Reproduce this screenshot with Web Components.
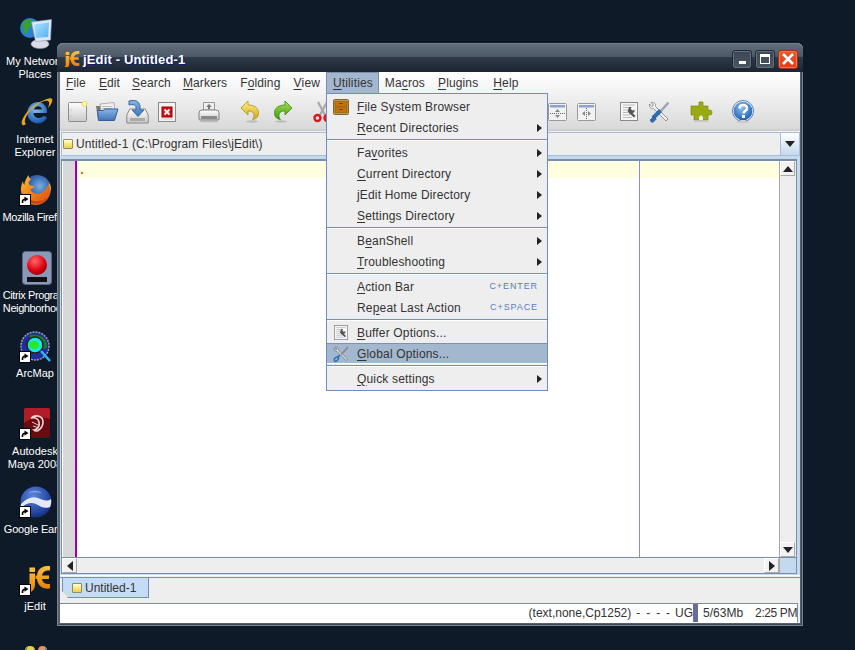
<!DOCTYPE html>
<html lang="en"><head><meta charset="utf-8"><title>jEdit</title>
<style>
html,body{margin:0;height:100%;overflow:hidden;background:#0f1a28;font-family:"Liberation Sans",Arial,sans-serif}
</style></head><body>
<jedit-desktop></jedit-desktop>
<script>
const defs=`<defs>
<linearGradient id="g1" x1="0" y1="0" x2="0" y2="1"><stop offset="0" stop-color="#fff"/><stop offset="1" stop-color="#c9c9c9"/></linearGradient>
<linearGradient id="blue" x1="0" y1="0" x2="0" y2="1"><stop offset="0" stop-color="#8db4e6"/><stop offset="1" stop-color="#3f74b8"/></linearGradient>
<linearGradient id="yel" x1="0" y1="0" x2="0" y2="1"><stop offset="0" stop-color="#fff28c"/><stop offset="1" stop-color="#d2a414"/></linearGradient>
<linearGradient id="grn" x1="0" y1="0" x2="0" y2="1"><stop offset="0" stop-color="#a8e050"/><stop offset="1" stop-color="#3f9a12"/></linearGradient>
<radialGradient id="red" cx=".4" cy=".3" r=".8"><stop offset="0" stop-color="#ff6a6a"/><stop offset=".6" stop-color="#e00010"/><stop offset="1" stop-color="#7a0008"/></radialGradient>
<radialGradient id="ge" cx=".4" cy=".3" r=".85"><stop offset="0" stop-color="#5a86dc"/><stop offset=".7" stop-color="#1f3f9c"/><stop offset="1" stop-color="#0c1c58"/></radialGradient>
<radialGradient id="ball" cx=".45" cy=".35" r=".8"><stop offset="0" stop-color="#8cc0f0"/><stop offset=".7" stop-color="#2a68b8"/><stop offset="1" stop-color="#0e3c80"/></radialGradient>
<radialGradient id="ff" cx=".6" cy=".4" r=".6"><stop offset="0" stop-color="#7ab0e0"/><stop offset=".7" stop-color="#2a5ca8"/><stop offset="1" stop-color="#1c3c80"/></radialGradient>
<linearGradient id="ffo" x1="0" y1="0" x2="1" y2="1"><stop offset="0" stop-color="#ffc030"/><stop offset=".5" stop-color="#f08018"/><stop offset="1" stop-color="#d84810"/></linearGradient>
<linearGradient id="ora" x1="0" y1="0" x2="0" y2="1"><stop offset="0" stop-color="#ffc23c"/><stop offset="1" stop-color="#e87c0c"/></linearGradient>
<linearGradient id="scr" x1="0" y1="0" x2="1" y2="1"><stop offset="0" stop-color="#a8e4ff"/><stop offset="1" stop-color="#58b0f0"/></linearGradient>
</defs>`;
const jeLogo=`<path d="M9.500 7.500h5.500v11c0 4-2 7-6 8.500l-1.500-3c1.500-.8 2-2 2-4.500zM9.500 1.500h5.500v4.500h-5.500z" fill="url(#ora)"/><path d="M30 0c-7.500-.5-12.500 3-13 9.500H15.500v3.500h1.500c.5 6.500 5.500 10.500 13 9.500v-4.500c-4.500.5-7.500-1-8-5h7v-3.500h-7c.5-3.500 3.500-5.500 8-5z" fill="url(#ora)"/>`;
const ICONS={
 new:[20,21,`<rect x=".5" y="1.500" width="18" height="19" rx="1" fill="url(#g1)" stroke="#8c8c8c"/><circle cx="3" cy="9" r=".6" fill="#999"/><circle cx="3" cy="15" r=".6" fill="#999"/><circle cx="16.500" cy="3" r="2.500" fill="#fff8a0" stroke="#e8d860"/>`],
 open:[24,21,`<path d="M1 5h6l1 2v11H3z" fill="#77797d"/><path d="M5 3l14-1.500 1 9H6z" fill="#eee" stroke="#999" stroke-width=".7"/><path d="M7 5.500h10M7 7.500h10" stroke="#aaa" stroke-width=".7"/><path d="M3.500 19.500L2.500 9.500h6l1-1.500h13.500l-3.500 11.500z" fill="url(#blue)" stroke="#345f98"/>`],
 save:[23,24,`<path d="M.8 15l3-6h15.400l3 6v8H.8z" fill="url(#g1)" stroke="#888"/><rect x="4" y="18" width="15" height="3" fill="#aaa"/><path d="M3 1c6-1.500 10 0 11 5v4h4l-6 6.500L6 10h4V7C10 5 7 4 3 5z" fill="url(#blue)" stroke="#2f6aa8"/>`],
 close:[18,20,`<rect x=".5" y=".5" width="17" height="19" fill="#f4f4f4" stroke="#8a8a8a"/><rect x="4" y="5" width="10" height="10" fill="#d01018" stroke="#900"/><path d="M6.500 7.500l5 5M11.500 7.500l-5 5" stroke="#fff" stroke-width="1.800"/><path d="M3 17h12" stroke="#ccc"/>`],
 print:[22,22,`<path d="M5.500 9V1.500h11V9z" fill="#f0f0f0" stroke="#999"/><path d="M11 3l3 3h-2v2h-2V6H8z" fill="#777"/><path d="M1 12q0-3 3-3h14q3 0 3 3v6q0 1-1 1H2q-1 0-1-1z" fill="url(#g1)" stroke="#808080"/><rect x="3" y="15" width="16" height="3" fill="#8a8a8a"/><path d="M2.500 20.500h17" stroke="#bbb" stroke-width="1.500"/>`],
 undo:[20,23,`<path d="M8 1L1 8l7 7v-4c4 0 6 1.500 6 4.500 0 1.500-.5 3-1.500 4C17 19 18.500 16 18.500 12.500 18.500 8 14 5 8 5z" fill="url(#yel)" stroke="#b09010" stroke-width=".8"/><ellipse cx="12" cy="21.500" rx="6" ry="1.200" fill="#bbb"/>`],
 redo:[20,23,`<path d="M12 1l7 7-7 7v-4c-4 0-6 1.500-6 4.500 0 1.500.5 3 1.500 4C3 19 1.500 16 1.500 12.500 1.500 8 6 5 12 5z" fill="url(#grn)" stroke="#3a8a10" stroke-width=".8"/><ellipse cx="8" cy="21.500" rx="6" ry="1.200" fill="#bbb"/>`],
 cut:[20,22,`<path d="M5 1l7 13M14 1L7 14" stroke="#a8a8a8" stroke-width="2.200" fill="none"/><circle cx="4.500" cy="17" r="3" fill="none" stroke="#d81818" stroke-width="2.400"/><circle cx="14.500" cy="17" r="3" fill="none" stroke="#d81818" stroke-width="2.400"/>`],
 splith:[19,18,`<rect x=".5" y=".5" width="18" height="17" rx="1" fill="#f2f2f2" stroke="#9a9a9a"/><rect x="2" y="2" width="15" height="2.500" fill="#8aa4cc"/><path d="M2 10.500h15" stroke="#666" stroke-dasharray="1 1"/><path d="M9.500 6l2.500 3H7zM9.500 15l2.500-3H7z" fill="#888"/>`],
 splitv:[19,18,`<rect x=".5" y=".5" width="18" height="17" rx="1" fill="#f2f2f2" stroke="#9a9a9a"/><rect x="2" y="2" width="15" height="2.500" fill="#8aa4cc"/><path d="M9.500 5v11" stroke="#666" stroke-dasharray="1 1"/><path d="M5 10.500l3-2.500v5zM14 10.500l-3-2.500v5z" fill="#888"/>`],
 bufopt:[18,20,`<rect x=".5" y=".5" width="17" height="18" fill="#f6f6f6" stroke="#8a8a8a"/><path d="M3 3h12M3 5.500h6M3 8h5M3 10.500h5M3 13h7M3 15.500h9" stroke="#bbb"/><path d="M9 5l2.500 0-.8 2 1.800 1.500 2-.8 0 2.500-2 .8 3 3-1.500 1.500-3.300-3-1-.5-2-2.500z" fill="#555"/>`],
 tools:[22,22,`<path d="M3 1.500L5.500 4 4 5.500 1.500 3C.8 5.500 2.500 8 5.500 7.500L18 20l2-2L7.500 5.500C8 2.500 5.500.8 3 1.500z" fill="#f2f2f2" stroke="#8a8a8a" stroke-width=".9"/><path d="M20.500 1.500l-9 10" stroke="#9aa6b4" stroke-width="2.500"/><path d="M12.500 9.500L5 17" stroke="#2f6cb0" stroke-width="4"/><path d="M5.500 15.500l-3 3a2 2 0 0 0 2.800 2.500l3-3z" fill="#2f6cb0" stroke="#1e4c88" stroke-width=".6"/>`],
 tools2:[22,22,`<path d="M3 1.500L5.500 4 4 5.500 1.500 3C.8 5.500 2.500 8 5.500 7.500L18 20l2-2L7.500 5.500C8 2.500 5.500.8 3 1.500z" fill="#d4d9de" stroke="#7a8088" stroke-width="1.200"/><path d="M20.500 1.500l-9 10" stroke="#889" stroke-width="2.400"/><path d="M9.500 12.500L6 16" stroke="#2f6cb0" stroke-width="2.600"/><ellipse cx="4.500" cy="18" rx="3.400" ry="2.200" transform="rotate(-45 4.500 18)" fill="none" stroke="#2f6cb0" stroke-width="2"/>`],
 plugin:[23,22,`<path d="M9 1h4v3q0 1 1 1h4v4h2q2 0 2 2.500T20 14h-2v5H4v-5H1V5h8V3q0-1 0-2z" fill="#9aaa14" stroke="#7c8a10" stroke-width=".7"/><path d="M9 19v-3l2-2 2 2v3z" fill="#f0f0e0"/><path d="M4 20.500h15" stroke="#ccc" stroke-width="1.500"/>`],
 help:[22,23,`<circle cx="11" cy="11" r="10" fill="url(#ball)" stroke="#fff" stroke-width="1.300"/><circle cx="11" cy="11" r="10.500" fill="none" stroke="#2a5a9c" stroke-width=".8"/><path d="M7.500 8.500c0-4.500 7.500-4.500 7.500-.3 0 2.800-3.500 2.800-3.500 5.300" fill="none" stroke="#fff" stroke-width="2.500"/><rect x="10" y="15" width="3" height="3" fill="#fff"/><ellipse cx="11" cy="22" rx="7" ry="1" fill="#ccc"/>`],
 fsb:[16,16,`<rect x=".5" y=".5" width="15" height="15" rx="1" fill="#bf9a50" stroke="#7a6a30"/><rect x="2" y="2.500" width="12" height="5" fill="#c8700c" stroke="#8a5a10" stroke-width=".6"/><rect x="2" y="8.500" width="12" height="5" fill="#c8700c" stroke="#8a5a10" stroke-width=".6"/><path d="M6.500 4.500h3M6.500 10.500h3" stroke="#5a3a08"/>`],
 je:[16,16,`<svg viewBox="7 0 24 24" width="16" height="16">${jeLogo}</svg>`],
 network:[34,34,`<circle cx="10" cy="11" r="10" fill="#2a7ed4"/><path d="M3 5c4-3 8-3 10-1s-2 5-4 7-1 7-3 6-5-8-3-12z" fill="#38a030"/><path d="M12 15l4-2 1 3z" fill="#38a030"/><path d="M16 23l8-1 1 5-7 1z" fill="#aab0c4"/><ellipse cx="20" cy="27" rx="9" ry="4.500" fill="#dcdce4" stroke="#9a9aa8" stroke-width=".6"/><path d="M11.500 5l20-2.500-1 20.500-15 1.500z" fill="#dfe8f8" stroke="#8aa0c0" stroke-width=".6"/><path d="M14 7.500l15-2-.8 14.500L16 21z" fill="url(#scr)"/>`],
 ie:[34,32,`<path d="M27 20c-2 8-15 9-19 0-3-9 4-15 10-15s10 6 9 11H13.500c0 6 8 6 10 3z M14 12.500h8c-.5-4.500-7-4.500-8 0z" fill="url(#ball)" fill-rule="evenodd"/><path d="M2.500 28C-1 25 7 12 18 6 24 3 31 0 32 2c1 2-1 6-4 9 1-3 2-6 0-7-3-1-9 2-14 6S2 24 6 27c-1 1-2 1.500-3.500 1z" fill="#e8a818"/>`],
 firefox:[32,32,`<circle cx="17" cy="15" r="14" fill="url(#ff)"/><path d="M29 9c4 9 0 18-8 21-8 3-16-1-19-8C0 17 1 11 3 7c0 2 .5 3 1.500 4 0-4 2-7 4-10 0 2 1 3.500 3 4.500-3 1-3.500 4-2 5.500 1 1 3 .5 5 1.500-1 2-3 2-4 3 1 3 5 5 9 4s8-5 9.500-11z" fill="url(#ffo)"/><path d="M1 17c1 7 8 13 16 12.500 5-.3 9-3.500 11-7-3 3.500-7 5.500-12 5S4 23 1 17z" fill="#c83c10"/><path d="M29 9c1 3 1.500 6 .8 9 1.500-3 1-7-.8-9z" fill="#ffe060"/>`],
 citrix:[30,34,`<rect x=".5" y=".5" width="29" height="33" rx="3" fill="#8c98b8" stroke="#5a6680"/><circle cx="15" cy="14" r="10" fill="url(#red)"/><rect x="5" y="26" width="20" height="5" fill="#111"/>`],
 arcmap:[32,32,`<circle cx="15" cy="15" r="14" fill="#1e2c9c" stroke="#9aa0b0" stroke-width="1.500" stroke-dasharray="2 1"/><path d="M10 4c7-2 16 2 17 9s-5 5-9 2-10-5-8-11z" fill="#1c7a2c"/><circle cx="15" cy="14" r="8" fill="#18e8e0" stroke="#222" stroke-width="1.500"/><ellipse cx="14" cy="14" rx="5" ry="4" fill="#28e828"/><path d="M21 20l9 10" stroke="#30b8ff" stroke-width="2.500"/>`],
 maya:[26,30,`<rect width="26" height="30" rx="2" fill="#6c0a12"/><path d="M0 2q0-2 2-2h22q2 0 2 2v9Q12 6 0 15z" fill="#b01c28"/><path d="M7 10c5-4 12-2 12 4s-6 11-9 8c3 0 6-4 5-8s-5-5-8-4z" fill="none" stroke="#f0d8d8" stroke-width="1.600"/><path d="M8 14l8 4M9 18l6 2" stroke="#e8c8c8"/>`],
 earth:[32,32,`<circle cx="16" cy="16" r="15.500" fill="url(#ge)"/><path d="M1 18c6-6 11-8 17-6 5 2 9 4 13 1 .5 3 .2 5-1 8-5 2-9 0-12-2-5-3-11-3-17 3-.5-1-.5-3 0-4z" fill="#e4e8f2"/><path d="M8 7c4-3 10-3 14 0-5-1-10-1-14 0z" fill="#8aa4e4"/>`],
 jedit:[32,32,`<svg viewBox="0 0 32 32" width="32" height="32" x="0" y="0">${jeLogo}</svg>`],
 tray:[24,8,`<path d="M0 8q0-5 5-5t5 5z" fill="#e8d040"/><path d="M0 8q1-4 3-4L1 8z" fill="#60a050"/><path d="M13 8q0-5 4.500-5T22 8z" fill="#f09060"/><path d="M20 4q2 1 2 4h-2z" fill="#4a90d0"/>`]
};
let uid=0;
function svgFor(name,size){
 const [w,h,body]=ICONS[name];
 const id='i'+(++uid);
 const b=body.replace(/url\(#(\w+)\)/g,`url(#${id}$1)`);
 const d=defs.replace(/id="(\w+)"/g,`id="${id}$1"`);
 const W=size||w,H=size?Math.round(size*h/w):h;
 return `<svg xmlns="http://www.w3.org/2000/svg" width="${W}" height="${H}" viewBox="0 0 ${w} ${h}">${d}${b}</svg>`;
}
class Base extends HTMLElement{
 constructor(){super();this.attachShadow({mode:'open'});}
}
class AppIcon extends Base{connectedCallback(){
 this.shadowRoot.innerHTML=`<style>:host{display:block;line-height:0;flex:none}svg{display:block}</style>${svgFor(this.getAttribute('name'),+this.getAttribute('size')||0)}`;
}}
customElements.define('app-icon',AppIcon);

class DeskIcon extends Base{connectedCallback(){
 const a=this.getAttribute('shortcut')!==null;
 const ix=this.getAttribute('ix')||20;
 this.shadowRoot.innerHTML=`<style>
 :host{position:absolute;left:0;width:70px;display:block;color:#fff;font:11px/13px "Liberation Sans",sans-serif;text-align:center;letter-spacing:var(--ls,0)}
 .ic{position:relative;height:var(--ih,34px);margin-left:${ix}px;width:36px}
 .sc{position:absolute;left:${20-ix}px;bottom:3px;width:10px;height:10px;background:#fff;outline:1px solid #000}
 .sc svg{display:block}
 .t{margin-top:var(--lg,9px);white-space:nowrap;display:flex;flex-direction:column;align-items:center}
 </style><div class="ic"><app-icon name="${this.getAttribute('icon')}"></app-icon>${a?`<div class="sc"><svg width="10" height="10" viewBox="0 0 10 10"><path d="M2.500 8V6.500Q2.500 4.500 5 4.200" fill="none" stroke="#000" stroke-width="1.600"/><path d="M4.500 1.500L8.500 4 4.500 6.800z" fill="#000"/></svg></div>`:''}</div><div class="t"><slot></slot></div>`;
}}
customElements.define('desk-icon',DeskIcon);

class TitleBar extends Base{connectedCallback(){
 this.shadowRoot.innerHTML=`<style>
 :host{display:flex;align-items:center;height:26px;padding:3px 5px 0 7px;flex:none;background:linear-gradient(#626f7c 0,#4c5866 48%,#2f3a48 50%,#1c2532 100%);border-radius:6px 6px 0 0;box-shadow:inset 0 1px #78848f}
 .t{font:bold 13px "Liberation Sans",sans-serif;color:#fff;text-shadow:1px 1px 0 #0a1a70;margin-left:3px;flex:1;letter-spacing:.15px}
 .b{width:20px;height:19px;box-sizing:border-box;border-radius:3px;border:1px solid #1e2834;background:linear-gradient(#3c4654,#4a5562);margin-left:3px;box-shadow:inset 0 0 0 1px #66717e;display:flex;align-items:center;justify-content:center}
 .x{background:linear-gradient(#e8582c,#dc4018);border-color:#a03010;box-shadow:inset 0 0 0 1px #f07848}
 .m{display:block;width:7px;height:3px;background:#fff;margin-top:7px}
 .r{display:block;width:10px;height:10px;box-sizing:border-box;border:1.500px solid #fff;border-top-width:3px}
 </style><app-icon name="je"></app-icon><span class="t"><slot></slot></span>
 <div class="b"><i class="m"></i></div><div class="b"><i class="r"></i></div><div class="b x"><svg width="12" height="12" viewBox="0 0 12 12"><path d="M1 1l10 10M11 1L1 11" stroke="#fff" stroke-width="2.500"/></svg></div>`;
}}
customElements.define('title-bar',TitleBar);

class MenuTitle extends Base{connectedCallback(){
 this.shadowRoot.innerHTML=`<style>
 :host{display:flex;align-items:center;height:21px;box-sizing:border-box;padding:0 7px 0 6px;color:#333;font:12px "Liberation Sans",sans-serif;letter-spacing:.13px;flex:none}
 :host([active]){background:#a3b8cf;box-shadow:inset 1px 0 #7a90ac,inset -1px 0 #7a90ac,inset 0 1px #7a90ac;padding:0 6px 0 7px}
 </style><slot></slot>`;
}}
customElements.define('menu-title',MenuTitle);
class MenuBar extends Base{connectedCallback(){
 this.shadowRoot.innerHTML=`<style>:host{display:flex;height:21px;flex:none;background:linear-gradient(#fff,#f2f2f2)}</style><slot></slot>`;
}}
customElements.define('menu-bar',MenuBar);

class ToolBar extends Base{connectedCallback(){
 this.shadowRoot.innerHTML=`<style>:host{display:flex;align-items:center;height:38px;box-sizing:border-box;flex:none;background:linear-gradient(#f2f2f2,#d9d9d9);border-bottom:2px solid #cfcfcf;padding:1px 0 0 8px}</style><slot></slot>`;
}}
customElements.define('tool-bar',ToolBar);

class BufferSwitcher extends Base{connectedCallback(){
 this.shadowRoot.innerHTML=`<style>
 :host{display:flex;height:24px;flex:none;box-sizing:border-box;margin:1px 0 0 1px;border:1px solid #a9bfd9;background:#eee;font:12px "Liberation Sans",sans-serif;letter-spacing:.11px;color:#333;align-items:center;position:relative}
 .s{flex:1;display:flex;align-items:center;gap:3px;padding-left:1px;white-space:nowrap}
 .d{width:19px;height:22px;box-sizing:border-box;border-left:1px solid #a9bfd9;background:linear-gradient(#fff,#c4d8ee);display:flex;align-items:center;justify-content:center}
 .d i{border:5.500px solid transparent;border-top:6px solid #222;border-bottom:0}
 </style><div class="s"><buffer-dot></buffer-dot><slot></slot></div><div class="d"><i></i></div>`;
}}
customElements.define('buffer-switcher',BufferSwitcher);
class BufferDot extends Base{connectedCallback(){
 this.shadowRoot.innerHTML=`<style>:host{display:block;width:10px;height:10px;box-sizing:border-box;flex:none;border:1px solid #8a8a70;border-radius:1px;background:linear-gradient(#ffffc8,#f0d040)}</style>`;
}}
customElements.define('buffer-dot',BufferDot);

class ScrollBtn extends Base{connectedCallback(){
 const d=this.getAttribute('dir');
 const tri={u:'border-bottom:6px solid #222;border-top:0;border-left:5px solid transparent;border-right:5px solid transparent',
  d:'border-top:6px solid #222;border-bottom:0;border-left:5px solid transparent;border-right:5px solid transparent',
  l:'border-right:6px solid #222;border-left:0;border-top:5px solid transparent;border-bottom:5px solid transparent',
  r:'border-left:6px solid #222;border-right:0;border-top:5px solid transparent;border-bottom:5px solid transparent'}[d];
 this.shadowRoot.innerHTML=`<style>:host{display:flex;align-items:center;justify-content:center;width:15px;height:15px;box-sizing:border-box;flex:none;background:#f2f2f2;border:1px solid #a8a8a8;border-top-color:#fff;border-left-color:#fff}i{display:block;${tri}}</style><i></i>`;
}}
customElements.define('scroll-btn',ScrollBtn);

class TextArea extends Base{connectedCallback(){
 this.shadowRoot.innerHTML=`<style>
 :host{display:flex;flex-direction:column;flex:none;height:420px;box-sizing:border-box;background:#c4d8ee;padding:3px 3px 1px 1px;border-bottom:1px solid #fff}
 .frame{flex:1;display:flex;flex-direction:column;border:1px solid #7a8ea8;border-top:2px solid #7a8ea8;background:#eee;min-height:0}
 .main{flex:1;display:flex;min-height:0}
 .gutter{width:12px;background:#d8d8d8;border-left:1px solid #fff;flex:none}
 .bar{width:2px;background:#a000a0;flex:none}
 .page{flex:1;background:#fff;position:relative;display:flex;min-width:0}
 .hl{position:absolute;left:0;right:0;top:1px;height:16px;background:#ffffe0}
 .caret{position:absolute;left:4px;top:11px;width:2px;height:2px;background:#ff5a20}
 .guide{position:absolute;top:0;bottom:0;left:562px;width:1px;background:#8a8ae0}
 .v{width:16px;flex:none;display:flex;flex-direction:column;border-left:1px solid #a8a8a8;background:#eee;justify-content:space-between}
 .h{height:15px;flex:none;display:flex;border-top:1px solid #7a8ea8;justify-content:space-between;background:#eee}
 .corner{width:16px;background:#c4d8ee;flex:none}
 .hs{flex:1;display:flex;justify-content:space-between;border-right:1px solid #a8a8a8}
 </style><div class="frame"><div class="main"><div class="gutter"></div><div class="bar"></div><div class="page"><div class="hl"></div><div class="caret"></div><div class="guide"></div></div>
 <div class="v"><scroll-btn dir="u"></scroll-btn><scroll-btn dir="d"></scroll-btn></div></div>
 <div class="h"><div class="hs"><scroll-btn dir="l"></scroll-btn><scroll-btn dir="r"></scroll-btn></div><div class="corner"></div></div></div>`;
}}
customElements.define('text-area',TextArea);

class TabStrip extends Base{connectedCallback(){
 this.shadowRoot.innerHTML=`<style>
 :host{display:block;flex:none;height:26px;box-sizing:border-box;margin-top:1px;background:#eee;border-top:1px solid #7090c8;padding-left:2px;font:12px "Liberation Sans",sans-serif;color:#333}
 .tab{display:flex;align-items:center;gap:3px;width:87px;height:20px;box-sizing:border-box;padding-left:9px;background:#c6dcf2;border:1px solid #6e8cc0;border-top:0;clip-path:polygon(0 0,100% 0,100% 100%,6px 100%,0 13px)}
 </style><div class="tab"><buffer-dot></buffer-dot><slot></slot></div>`;
}}
customElements.define('tab-strip',TabStrip);

class StatusBar extends Base{connectedCallback(){
 this.shadowRoot.innerHTML=`<style>
 :host{display:flex;align-items:center;justify-content:flex-end;flex:none;height:20px;box-sizing:border-box;margin-right:2px;background:#fff;border-top:1px solid #808a96;border-right:1px solid #808a96;border-bottom:1px solid #fff;font:12px "Liberation Sans",sans-serif;color:#333;white-space:nowrap}
 .d{margin-left:5px;word-spacing:2.600px}
 .u{margin-left:5px}
 .mem{width:5px;height:18px;background:#6a6a9c;margin:0 5px 0 0}
 .c{margin-left:12px;letter-spacing:-.4px}
 </style><span>(text,none,Cp1252)</span><span class="d">- - - -</span><span class="u">UG</span><span class="mem"></span><span>5/63Mb</span><span class="c">2:25 PM</span>`;
}}
customElements.define('status-bar',StatusBar);

class MenuRow extends Base{connectedCallback(){
 const ic=this.getAttribute('icon'),acc=this.getAttribute('accel'),sub=this.getAttribute('sub')!==null,sz=this.getAttribute('isize')||'';
 this.shadowRoot.innerHTML=`<style>
 :host{display:flex;align-items:center;height:21px;font:12px "Liberation Sans",sans-serif;letter-spacing:.17px;color:#333;white-space:nowrap;padding-right:5px;box-sizing:border-box}
 :host([sel]){background:#a3b8cf;box-shadow:inset 0 1px #7a90c0,inset 0 -1px #fff}
 .i{width:30px;flex:none;display:flex;justify-content:center;box-sizing:border-box;padding-right:2px}
 .l{flex:1}
 .a{font-size:9px;letter-spacing:.9px;color:#5a7cc0;padding-right:4px;margin-top:-2px}
 .arrow{width:0;height:0;border-left:5px solid #222;border-top:4px solid transparent;border-bottom:4px solid transparent}
 </style><div class="i">${ic?`<app-icon name="${ic}" size="${sz}"></app-icon>`:''}</div><div class="l"><slot></slot></div>${acc?`<span class="a">${acc}</span>`:''}${sub?'<i class="arrow"></i>':''}`;
}}
customElements.define('menu-row',MenuRow);
class MenuSep extends Base{connectedCallback(){
 this.shadowRoot.innerHTML=`<style>:host{display:block;height:4px;box-sizing:border-box;padding-top:1px}i{display:block;height:1px;background:#7090c0;box-shadow:0 1px #fff}</style><i></i>`;
}}
customElements.define('menu-sep',MenuSep);
class PopupMenu extends Base{connectedCallback(){
 this.shadowRoot.innerHTML=`<style>:host{position:absolute;left:269px;top:50px;width:222px;box-sizing:border-box;background:#eee;border:1px solid #6e8cc0;padding:2px 0 0;display:block;height:298px}</style><slot></slot>`;
}}
customElements.define('popup-menu',PopupMenu);

class AppWindow extends Base{connectedCallback(){
 this.shadowRoot.innerHTML=`<style>
 :host{position:absolute;left:57px;top:43px;width:746px;height:583px;box-sizing:border-box;display:block;background:#56626f;border-radius:6px 6px 0 0;box-shadow:inset 0 0 0 1px #77838f,inset -1px -1px 0 1px #3c4755}
 .in{height:100%;display:flex;flex-direction:column}
 .client{flex:1;display:flex;flex-direction:column;margin:0 3px 3px;background:#eee;min-height:0;position:relative}
 </style><div class="in"><slot name="title"></slot><div class="client"><slot></slot></div></div><slot name="popup"></slot>`;
}}
customElements.define('app-window',AppWindow);

function u(s,ch){const i=s.indexOf(ch);return `${s.slice(0,i)}<u style="text-underline-offset:2px">${ch}</u>${s.slice(i+1)}`;}
class JeditDesktop extends Base{connectedCallback(){
 const m=(s,c,a='')=>`<menu-title ${a}>${u(s,c)}</menu-title>`;
 const r=(s,c,a='')=>`<menu-row ${a}>${u(s,c)}</menu-row>`;
 const sp=w=>`<span style="display:block;flex:none;width:${w}px"></span>`;
 const ti=(n,w)=>`<app-icon name="${n}"></app-icon>${sp(w)}`;
 this.shadowRoot.innerHTML=`<style>:host{display:block;position:absolute;inset:0;background:#0f1a28;overflow:hidden}</style>
 <desk-icon icon="network" style="top:17px;--lg:4px">My Network<br>Places</desk-icon>
 <desk-icon icon="ie" style="top:97px;--ih:34px;--lg:2px">Internet<br>Explorer</desk-icon>
 <desk-icon icon="firefox" shortcut style="top:174px;--lg:3px;--ls:-.4px">Mozilla Firefox</desk-icon>
 <desk-icon icon="citrix" style="top:251px;--lg:4px;--ls:-.4px" ix="22">Citrix Program<br>Neighborhood</desk-icon>
 <desk-icon icon="arcmap" shortcut style="top:331px;--lg:2px">ArcMap</desk-icon>
 <desk-icon icon="maya" shortcut style="top:408px;--lg:3px" ix="24">Autodesk<br>Maya 2008</desk-icon>
 <desk-icon icon="earth" shortcut style="top:486px;--lg:3px;--ls:-.2px">Google Earth</desk-icon>
 <desk-icon icon="jedit" shortcut style="top:566px;--ih:32px;--lg:2px">jEdit</desk-icon>
 <desk-icon icon="tray" style="top:643px" ix="25"></desk-icon>
 <app-window>
  <title-bar slot="title">jEdit - Untitled-1</title-bar>
  <menu-bar>
   ${m('File','F')}${m('Edit','E')}${m('Search','S','style="margin-left:-1px"')}${m('Markers','M','style="margin-left:-1px"')}${m('Folding','o')}${m('View','V')}${m('Utilities','U','active style="margin-left:-1px"')}${m('Macros','c')}${m('Plugins','P')}${m('Help','H','style="margin-left:2px"')}
  </menu-bar>
  <tool-bar>
   ${ti('new',7)}${ti('open',7)}${ti('save',9)}${ti('close',22)}${ti('print',20)}${ti('undo',13)}${ti('redo',20)}${ti('cut',215)}${ti('splith',10)}${ti('splitv',24)}${ti('bufopt',10)}${ti('tools',20)}${ti('plugin',19)}${ti('help',0)}
  </tool-bar>
  <buffer-switcher>Untitled-1 (C:\\Program Files\\jEdit\\)</buffer-switcher>
  <text-area></text-area>
  <tab-strip>Untitled-1</tab-strip>
  <status-bar></status-bar>
  <popup-menu slot="popup">
   ${r('File System Browser','F','icon="fsb"')}${r('Recent Directories','R','sub')}<menu-sep></menu-sep>
   ${r('Favorites','v','sub')}${r('Current Directory','C','sub')}${r('jEdit Home Directory','j','sub')}${r('Settings Directory','S','sub')}<menu-sep></menu-sep>
   ${r('BeanShell','e','sub')}${r('Troubleshooting','T','sub')}<menu-sep></menu-sep>
   ${r('Action Bar','A','accel="C+ENTER"')}${r('Repeat Last Action','p','accel="C+SPACE"')}<menu-sep></menu-sep>
   ${r('Buffer Options...','B','icon="bufopt" isize="14"')}${r('Global Options...','G','icon="tools2" isize="16" sel')}<menu-sep></menu-sep>
   ${r('Quick settings','Q','sub')}
  </popup-menu>
 </app-window>`;
}}
customElements.define('jedit-desktop',JeditDesktop);
</script>
</body></html>
